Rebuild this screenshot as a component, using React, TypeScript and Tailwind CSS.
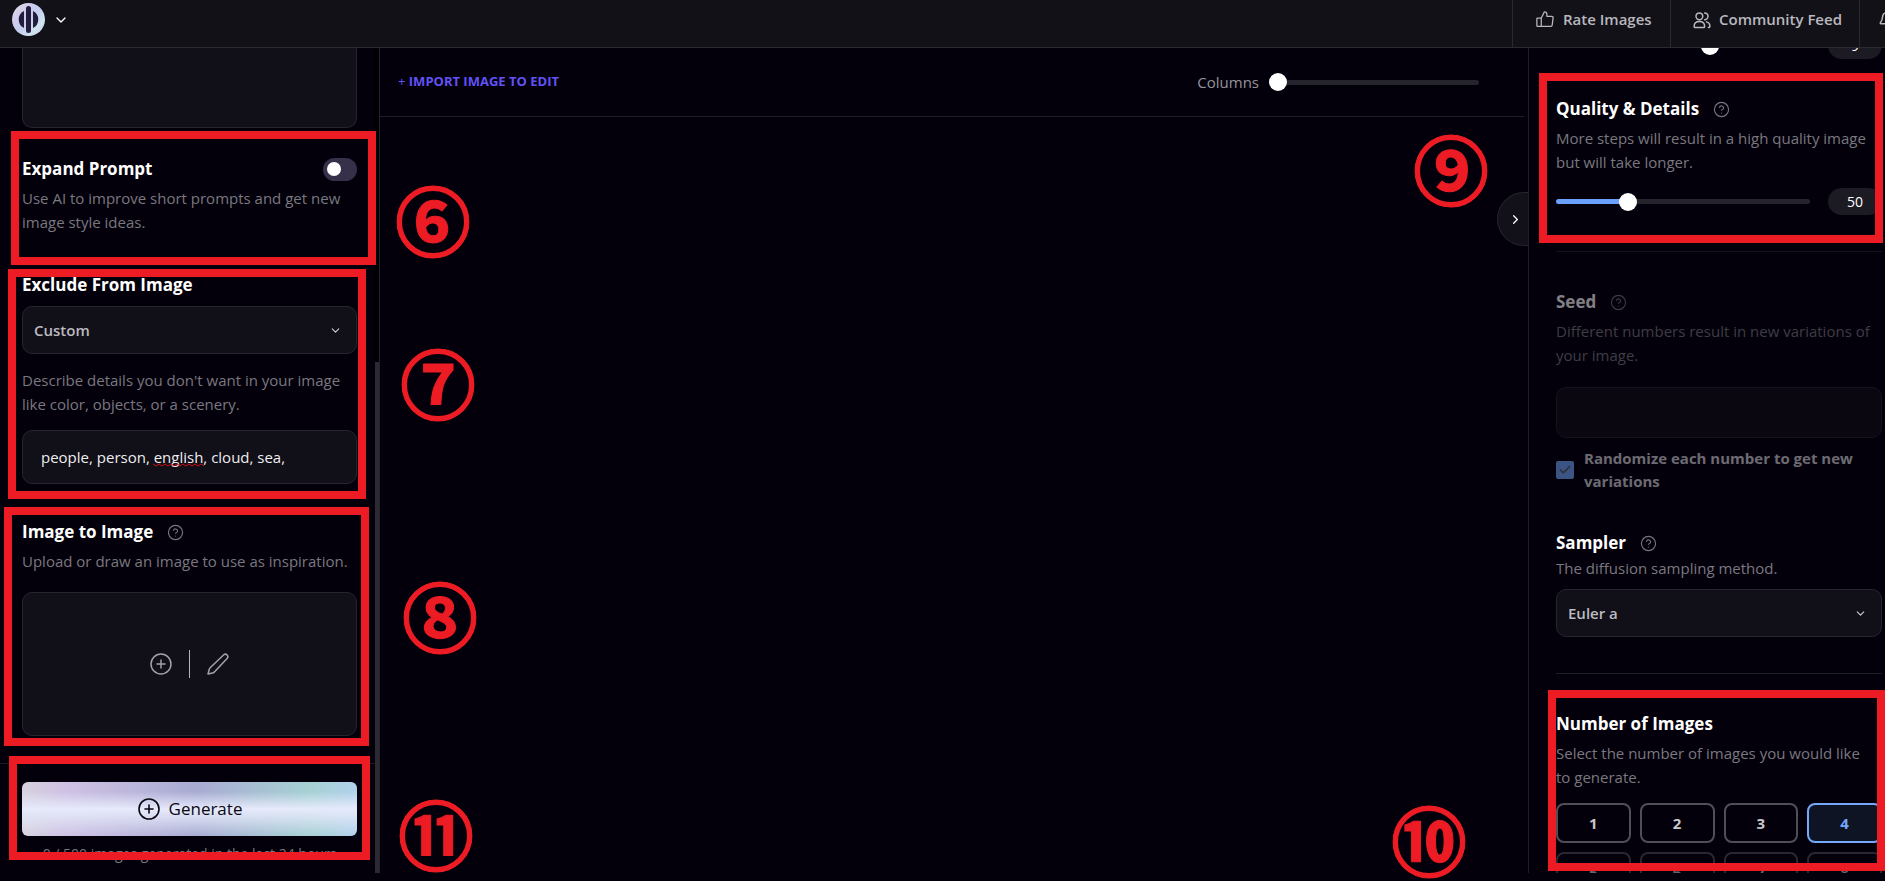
import React, { useState } from "react";
import {
  Bell,
  Check,
  ChevronDown,
  ChevronRight,
  CircleHelp,
  CirclePlus,
} from "lucide-react";
import { PiThumbsUp } from "react-icons/pi";

interface SectionProps {
  title: string;
  description: string;
  help?: boolean;
  tight?: boolean;
  className?: string;
  aside?: React.ReactNode;
}

const RANGE_BASE =
  "h-[5px] min-w-0 appearance-none rounded-full cursor-pointer [&::-webkit-slider-thumb]:appearance-none [&::-webkit-slider-thumb]:h-[18px] [&::-webkit-slider-thumb]:w-[18px] [&::-webkit-slider-thumb]:rounded-full [&::-webkit-slider-thumb]:bg-white";

function Logo() {
  return (
    <svg className="h-[33px] w-[33px]" viewBox="0 0 33 33" aria-hidden="true">
      <defs>
        <linearGradient id="logo-ring" x1="0" y1="0" x2="1" y2="1">
          <stop offset="0" stopColor="#e6e3dc" />
          <stop offset="0.25" stopColor="#d3cdea" />
          <stop offset="0.5" stopColor="#c3cdf0" />
          <stop offset="0.75" stopColor="#cfe3ef" />
          <stop offset="1" stopColor="#cbc9ea" />
        </linearGradient>
      </defs>
      <circle cx="16.5" cy="16.5" r="16.5" fill="url(#logo-ring)" />
      <path d="M12 8v17a9.500 9.500 0 0 1 0-17z" fill="#241c3c" />
      <path d="M21 8v17a9.500 9.500 0 0 0 0-17z" fill="#241c3c" />
      <rect x="14" y="3" width="5" height="27" rx="2.5" fill="#241c3c" />
    </svg>
  );
}

function UsersIcon() {
  return (
    <svg
      className="h-[18px] w-[18px] shrink-0"
      viewBox="0 0 24 24"
      fill="none"
      stroke="currentColor"
      strokeWidth="2"
      strokeLinecap="round"
      strokeLinejoin="round"
      aria-hidden="true"
    >
      <circle cx="8.5" cy="7" r="4.5" />
      <path d="M1.5 20.5c0-4 2.5-6.500 7-6.500s7 2.500 7 6.500c0 1-.5 1.500-1.500 1.500H3c-1 0-1.500-.5-1.500-1.500z" />
      <path d="M15.500 2.500a4.500 4.500 0 0 1 0 9M18 14.500c3 .8 4.500 3 4.500 6 0 1-.5 1.500-2 1.500" />
    </svg>
  );
}

function PencilIcon() {
  return (
    <svg
      className="h-6 w-6"
      viewBox="0 0 24 24"
      fill="none"
      stroke="currentColor"
      strokeWidth="1.5"
      strokeLinecap="round"
      strokeLinejoin="round"
      aria-hidden="true"
    >
      <path d="M21.3 6.200a2.500 2.500 0 0 0-3.500-3.500L4.400 15.500c-.6.6-1 1.200-1.200 2L2 22l4.600-1.100c.8-.2 1.500-.6 2-1.200z" />
    </svg>
  );
}

function Section({ title, description, help, tight, className = "", aside }: SectionProps) {
  return (
    <div className={className}>
      <div className="flex h-6 items-center justify-between">
        <h2 className="flex items-center gap-3.5 text-[17px] leading-6 font-bold">
          {title}
          {help && <CircleHelp size={17} strokeWidth={1.6} className="text-[#77757f]" />}
        </h2>
        {aside}
      </div>
      <p className={`pr-1.5 text-[15px] leading-6 text-[#7a787f] ${tight ? "mt-px" : "mt-[5px]"}`}>{description}</p>
    </div>
  );
}

function Dropdown({ label, options, className = "" }: { label: string; options: string[]; className?: string }) {
  return (
    <div className={`relative ${className}`}>
      <select
        aria-label={label}
        className="block h-12 w-full appearance-none rounded-[10px] border border-[#26242d] bg-[#110f17] px-[11px] text-[15px] font-semibold text-[#bcbbc0]"
      >
        {options.map((option) => (
          <option key={option}>{option}</option>
        ))}
      </select>
      <ChevronDown size={13} className="pointer-events-none absolute top-[18px] right-[15px] text-[#d0cfd4]" />
    </div>
  );
}

// Numbered marker: the ring is drawn over the glyph's own thin one
function Marker({ label, className }: { label: string; className: string }) {
  return (
    <span
      className={`absolute flex h-[72px] w-[72px] items-center justify-center rounded-full border-[5px] border-[#ed1c24] pb-2 font-['Noto_Sans_CJK_JP',sans-serif] text-[76px] leading-none font-bold text-[#ed1c24] [-webkit-text-stroke:1px_#ed1c24] ${className}`}
    >
      {label}
    </span>
  );
}

function Frame({ className }: { className: string }) {
  return <div className={`absolute border-8 border-[#ed1c24] ${className}`} />;
}

function Header() {
  return (
    <header className="flex h-12 shrink-0 items-stretch justify-between border-b border-[#2a2831] bg-[#121118]">
      <button className="flex items-center gap-2 pb-2 pl-3" aria-label="Menu">
        <Logo />
        <ChevronDown size={16} />
      </button>
      <nav className="flex text-[15px] font-semibold text-[#b9b8be]">
        <a href="#rate" className="flex w-[158px] items-center gap-2 border-l border-[#2a2831] pb-2 pl-[22px] whitespace-nowrap">
          <PiThumbsUp size={20} className="shrink-0" />
          Rate Images
        </a>
        <a href="#community" className="flex w-[189px] items-center gap-2 border-l border-[#2a2831] pb-2 pl-[22px] whitespace-nowrap">
          <UsersIcon />
          Community Feed
        </a>
        <a href="#alerts" aria-label="Notifications" className="flex w-[26px] items-center overflow-hidden border-l border-[#2a2831] pb-2 pl-[18px]">
          <Bell size={18} className="shrink-0" />
        </a>
      </nav>
    </header>
  );
}

function Sidebar() {
  const [exclude, setExclude] = useState("people, person, english, cloud, sea,");

  return (
    <aside className="flex w-[380px] shrink-0">
      <div className="flex min-w-0 flex-1 flex-col">
        <div className="min-h-0 flex-1 overflow-hidden pr-[18px] pl-[22px]">
          <textarea
            aria-label="Prompt"
            className="block h-20 w-full resize-none rounded-b-[10px] border border-t-0 border-[#26242d] bg-[#110f17]"
          />
          <Section
            className="mt-[29px]"
            title="Expand Prompt"
            description="Use AI to improve short prompts and get new image style ideas."
            aside={
              <input
                type="checkbox"
                role="switch"
                aria-label="Expand Prompt"
                className="flex h-[23px] w-[34px] appearance-none items-center rounded-full bg-[#36304a] px-1 before:h-3.5 before:w-3.5 before:rounded-full before:bg-white before:content-['']"
              />
            }
          />
          <h2 className="mt-[39px] text-[17px] leading-6 font-bold">Exclude From Image</h2>
          <Dropdown className="mt-[9px]" label="Exclude From Image" options={["Custom", "None"]} />
          <label htmlFor="exclude" className="mt-3.5 block text-[15px] leading-6 text-[#7a787f]">
            Describe details you don't want in your image like color, objects, or a scenery.
          </label>
          <div className="relative mt-3.5">
            <input
              id="exclude"
              value={exclude}
              onChange={(e) => setExclude(e.target.value)}
              className="block h-[54px] w-full rounded-[10px] border border-[#26242d] bg-[#110f17] px-[18px] text-[15px] text-[#eeedf0]"
            />
            {/* Spelling mark */}
            <svg className="absolute top-[33px] left-[131px] h-1 w-[51px]" viewBox="0 0 51 4" fill="none" stroke="#d01018" aria-hidden="true">
              <path d="M0 1l3 2 3-2 3 2 3-2 3 2 3-2 3 2 3-2 3 2 3-2 3 2 3-2 3 2 3-2 3 2 3-2 3 2" />
            </svg>
          </div>
          <Section
            className="mt-9"
            title="Image to Image"
            help
            description="Upload or draw an image to use as inspiration."
          />
          <div className="mt-[19px] flex h-36 items-center justify-center gap-4 rounded-[10px] border border-[#26242d] bg-[#110f17] text-[#a3a2a9]">
            <button aria-label="Upload image">
              <CirclePlus size={24} strokeWidth={1.5} />
            </button>
            <div className="h-7 w-px bg-[#b5b4ba]" />
            <button aria-label="Draw image">
              <PencilIcon />
            </button>
          </div>
        </div>
        <div className="border-t border-[#1b1922] pt-[18px] pr-[18px] pb-[9px] pl-[22px]">
          <button className="flex h-[54px] w-full items-center justify-center gap-2 rounded-md bg-[linear-gradient(180deg,transparent_18%,#e6eafb_50%,#e2e7f8cc_65%,transparent_100%),linear-gradient(90deg,#d6d2de,#d0c2e4_12%,#a9abd3_52%,#a6d1d3_86%,#b2d1ed)] text-[17px] font-medium text-[#0b0812]">
            <CirclePlus size={24} strokeWidth={1.6} />
            Generate
          </button>
          <p className="mt-2 text-center text-[14px] leading-5 text-[#7a787f]">
            0 / 500 images generated in the last 24 hours
          </p>
        </div>
      </div>
      <div className="flex w-[5px] flex-col border-r border-[#25232c] bg-black">
        <div className="mt-auto h-[62%] bg-[#2b2932]" />
      </div>
    </aside>
  );
}

function Workspace() {
  return (
    <main className="relative min-w-0 flex-1">
      <div className="mr-1 flex h-[69px] items-center justify-between border-b border-[#1e1c25] pr-[45px] pl-[18px]">
        <button className="text-[13px] font-bold text-[#6152f5]">
          <span className="font-normal">+</span> IMPORT IMAGE TO EDIT
        </button>
        <label className="flex items-center gap-2.5 text-[15px] text-[#96949c]">
          Columns
          <input type="range" min={1} max={8} defaultValue={1} className={`${RANGE_BASE} w-[210px] bg-[#25232c]`} />
        </label>
      </div>
      <button
        aria-label="Collapse panel"
        className="absolute top-36 right-0 flex h-[54px] w-[31px] items-center justify-center rounded-l-full border border-r-0 border-[#26242d] bg-[#121018] pl-1"
      >
        <ChevronRight size={15} />
      </button>
    </main>
  );
}

function SettingsPanel() {
  const [count, setCount] = useState(4);

  return (
    <aside className="w-[357px] shrink-0 overflow-hidden border-l border-[#1e1c25] pr-[3px] pl-[27px]">
      <div className="-mt-4 flex items-center justify-between">
        <input
          type="range"
          aria-label="Guidance"
          min={1}
          max={14}
          defaultValue={9}
          className={`${RANGE_BASE} w-[254px] bg-[#25232c]`}
        />
        <output className="flex h-[27px] w-[54px] items-center justify-center rounded-full bg-[#1c1a23] text-[14px]">9</output>
      </div>
      <Section
        className="mt-[38px]"
        title="Quality & Details"
        help
        description="More steps will result in a high quality image but will take longer."
      />
      <div className="mt-3.5 flex items-center justify-between">
        <input
          type="range"
          aria-label="Quality & Details"
          min={10}
          max={160}
          defaultValue={50}
          className={`${RANGE_BASE} w-[254px] bg-[linear-gradient(90deg,#6ba0fb_28%,#25232c_28%)]`}
        />
        <output className="flex h-[27px] w-[54px] items-center justify-center rounded-full bg-[#1c1a23] text-[14px]">50</output>
      </div>
      <hr className="mt-9 border-[#15131b]" />

      <div className="mt-[38px] opacity-50">
        <Section title="Seed" help description="Different numbers result in new variations of your image." />
        <input
          aria-label="Seed"
          disabled
          className="mt-5 block h-[51px] w-full rounded-[10px] border border-[#26242d] bg-[#110f17]"
        />
        <label className="mt-[9px] flex items-center gap-2.5 text-[15px] leading-[23px] font-bold text-[#d5d4d8]">
          <span className="relative shrink-0">
            <input type="checkbox" defaultChecked disabled className="block h-[18px] w-[18px] appearance-none rounded-xs bg-[#74a8fb]" />
            <Check size={14} strokeWidth={3} className="absolute top-0.5 left-0.5 text-[#5f6370]" />
          </span>
          Randomize each number to get new variations
        </label>
      </div>

      <Section className="mt-[38px]" title="Sampler" help tight description="The diffusion sampling method." />
      <Dropdown className="mt-[9px]" label="Sampler" options={["Euler a", "DDIM"]} />
      <hr className="mt-9 border-[#1e1c25]" />

      <Section
        className="mt-[38px]"
        title="Number of Images"
        description="Select the number of images you would like to generate."
      />
      <div className="mt-3.5 grid grid-cols-4 gap-[9px]">
        {[1, 2, 3, 4, 5, 6, 7, 8].map((n) => (
          <button
            key={n}
            onClick={() => setCount(n)}
            disabled={n > 4}
            className={`h-10 rounded-lg border-2 text-[15px] font-bold disabled:opacity-50 ${
              n === count ? "border-[#74a8fb] bg-[#0f1424] text-[#74a8fb]" : "border-[#504e56] text-[#c9c8cc]"
            }`}
          >
            {n}
          </button>
        ))}
      </div>
    </aside>
  );
}

export default function App() {
  return (
    <div className="relative flex h-screen flex-col overflow-hidden bg-[#03000b] pb-2 font-['Open_Sans',sans-serif] text-white">
      <Header />
      <div className="flex min-h-0 flex-1">
        <Sidebar />
        <Workspace />
        <SettingsPanel />
      </div>

      {/* Annotations */}
      <div className="pointer-events-none absolute inset-0 overflow-hidden">
        <Frame className="top-[131px] left-[11px] h-[134px] w-[365px]" />
        <Frame className="top-[269px] left-2 h-[230px] w-[358px]" />
        <Frame className="top-[507px] left-1 h-[239px] w-[365px]" />
        <Frame className="top-[756px] left-[9px] h-[104px] w-[361px]" />
        <Frame className="top-[73px] right-[2px] h-[170px] w-[344px]" />
        <Frame className="top-[690px] right-0 h-[181px] w-[337px]" />
        <Marker label="⑥" className="top-[186px] left-[397px]" />
        <Marker label="⑦" className="top-[349px] left-[402px]" />
        <Marker label="⑧" className="top-[582px] left-[404px]" />
        <Marker label="⑪" className="top-[800px] left-[400px]" />
        <Marker label="⑨" className="top-[135px] right-[398px]" />
        <Marker label="⑩" className="top-[806px] right-[420px]" />
      </div>
    </div>
  );
}
